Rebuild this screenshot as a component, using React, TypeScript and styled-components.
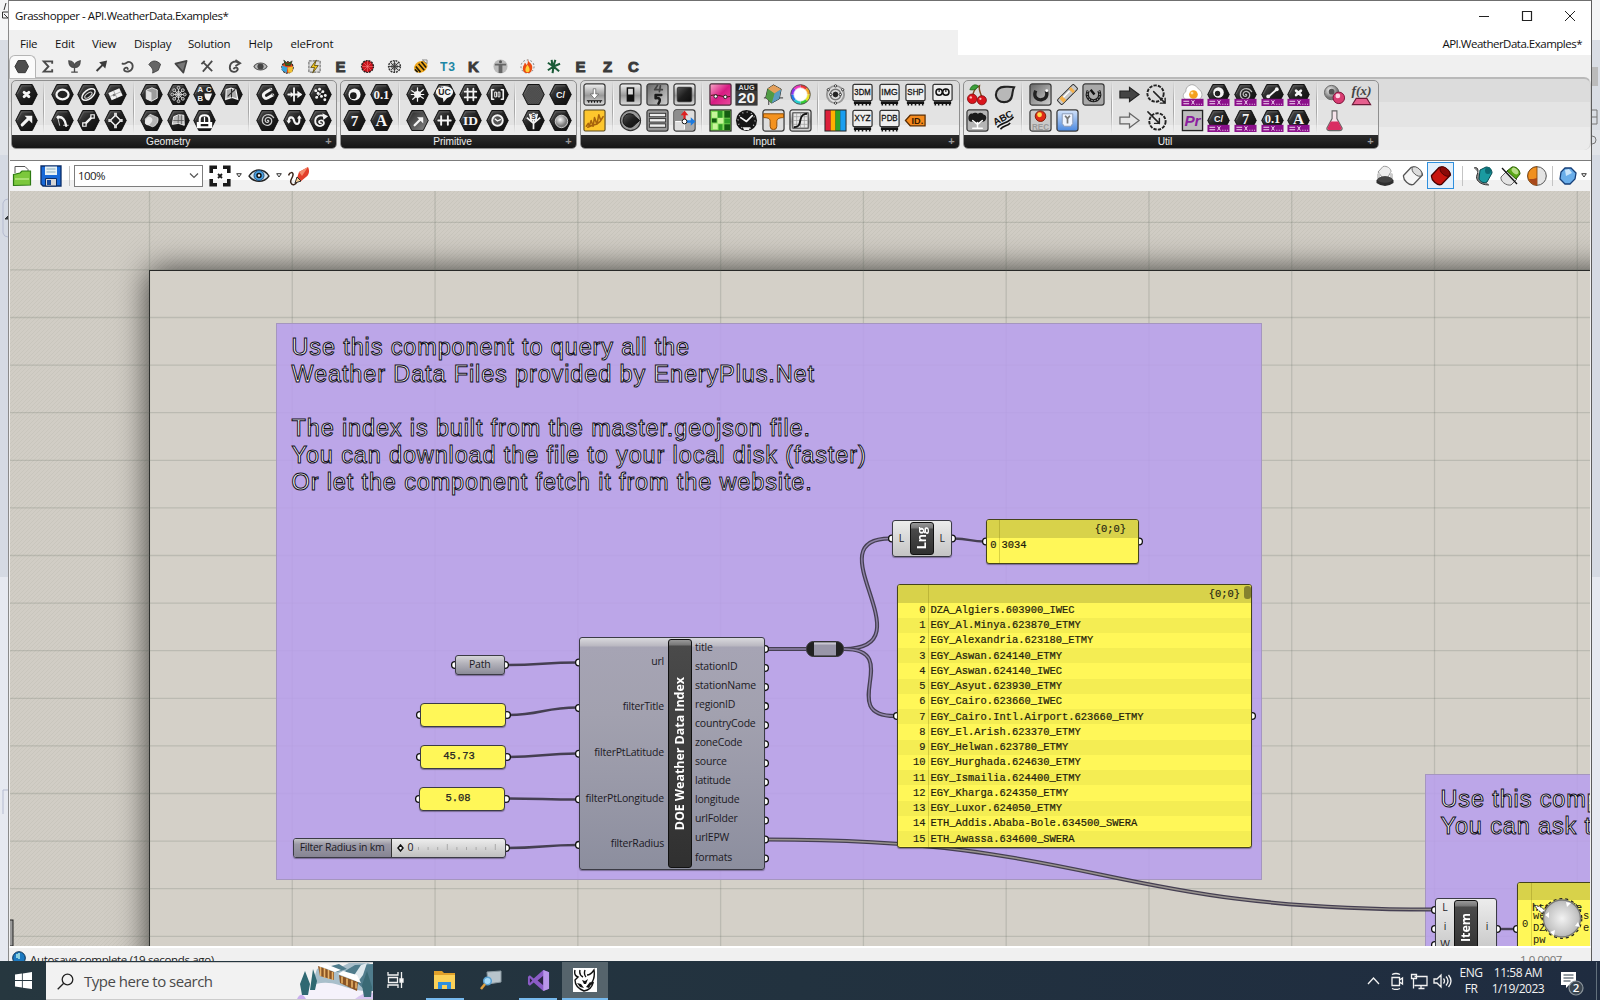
import React from "react";
import styled, { createGlobalStyle } from "styled-components";

const UI = '"Open Sans", "Noto Sans", sans-serif';
const MONO = '"Liberation Mono", monospace';

const Global = createGlobalStyle`
  html, body { margin: 0; padding: 0; height: 100%; overflow: hidden; }
  * { box-sizing: border-box; }
  body { font-family: ${UI}; }
  svg { display: block; }
`;

/* ---------- shell ---------- */
const Desktop = styled.div`
  width: 1600px; height: 1000px; overflow: hidden;
  display: grid; grid-template-rows: 961px 39px;
  background: #dcdfe4;
`;
const Stage = styled.div`display: grid; grid-template-columns: 8px 1584px 8px; overflow: hidden;`;
const Edge = styled.div`
  background: linear-gradient(#f4f5f6 0 40px, #d9dde4 40px 130px, #e0e3e8 130px 155px, #d5dae3 155px 60%, #e6e9f0 60%);
  overflow: hidden;
`;
const Window = styled.div`
  display: grid; grid-template-rows: 29px 25px 22px 83px 31px 755px 16px;
  background: #f0f0f0; border-top: 1px solid #6f6f6f;
  border-left: 1px solid #8a8a8a; border-right: 1px solid #5c5c5c; overflow: hidden;
`;
const TitleBar = styled.div`display: flex; align-items: center; background: #fff; padding: 0 0 0 6px; justify-content: space-between;`;
const TitleText = styled.span`font-size: 11.500px; letter-spacing: -0.460px; color: #111; white-space: nowrap;`;
const WinButtons = styled.div`display: flex; gap: 26px; padding-right: 13px;`;
const MenuBar = styled.div`
  display: flex; align-items: center; font-size: 11.500px; letter-spacing: -0.220px; color: #111;
  background: linear-gradient(90deg, #f0f0f0 0 949px, #fff 949px);
`;
const MenuItem = styled.span<{ $w: number }>`width: ${p => p.$w}px; white-space: nowrap; padding-top: 1px;`;
const MenuDoc = styled.span`margin-left: auto; padding-right: 9px; letter-spacing: -0.500px; padding-top: 1px;`;

/* ---------- tabs & ribbon ---------- */
const TabRow = styled.div`display: flex; height: 22px; background: #f0f0f0;`;
const Tab = styled.div<{ $on?: boolean }>`
  width: 26.640px; height: ${p => (p.$on ? 23 : 22)}px; display: flex; align-items: center; justify-content: center;
  position: relative; z-index: ${p => (p.$on ? 2 : 0)}; padding-right: 2px; flex: none;
  border: ${p => (p.$on ? "1px solid #b5b5b5" : "1px solid transparent")}; border-bottom: none;
  border-radius: 6px 6px 0 0; background: ${p => (p.$on ? "#fafafa" : "transparent")};
`;
const Ribbon = styled.div`height: 83px; padding-bottom: 10px;`;
const RibbonBody = styled.div`
  height: 73px; display: flex; gap: 3px; padding: 1px 0 0 2px;
  border-top: 2px solid #b9b9b9; border-right: 1px solid #cfcfcf; border-radius: 0 7px 7px 0;
  background: linear-gradient(#dcdcdc 0 23px, #e4e4e4 23px 48px, #ebebeb 48px);
`;
const RibbonPanel = styled.div<{ $w: number }>`
  width: ${p => p.$w}px; height: 69px; border: 1px solid #8f8f8f; border-radius: 5px; overflow: hidden;
  background: linear-gradient(#dcdcdc 0 19px, #e3e3e3 19px 44px, #ececec 44px);
  display: flex; flex-direction: column; justify-content: space-between;
`;
const IconArea = styled.div`display: flex; padding: 0 0 0 1px; height: 54px;`;
const IconGroup = styled.div`display: grid; grid-auto-flow: column; grid-template-rows: 26.600px 26.600px; grid-auto-columns: 26.660px; place-items: center;`;
const Divider = styled.div`
  width: 9.300px; height: 52px; display: flex; justify-content: center;
  &::before { content: ""; width: 2px; background: linear-gradient(90deg, #a8a8a8 50%, #fafafa 50%);
  mask-image: linear-gradient(transparent, #000 40%, #000 60%, transparent); }
`;
const PanelLabel = styled.div`
  height: 13px; display: grid; grid-template-columns: 3px 1fr 14px; align-items: center; text-align: center;
  background: linear-gradient(#2c2c2c, #151515); color: #eee;
  font: 10.200px/12px "Liberation Sans", sans-serif; letter-spacing: -.050px;
`;
const Plus = styled.span`color: #9a9a9a; font-weight: bold; font-size: 11px; line-height: 11px;`;

const ink = "#f4f4f4";
const L = (d: string, w = 1.6, c = ink, f = "none") => <path d={d} stroke={c} strokeWidth={w} fill={f} strokeLinecap="round" strokeLinejoin="round" />;
const T = (s: string, size = 12, c = ink, y = 16.4, fam = "Liberation Serif", x = 12) => (
  <text x={x} y={y} fontSize={size} fontFamily={`"${fam}"`} fontWeight="bold" textAnchor="middle" fill={c}>{s}</text>
);
const Hex = ({ fill = "url(#hexFill)" }: { fill?: string }) => (
  <>
    <polygon points="0.8,12 6,1.6 18,1.6 23.2,12 18,22.4 6,22.4" fill={fill} stroke="#0a0a0a" strokeWidth="1" strokeLinejoin="round" />
    <path d="M2.4 11.5 7 3h10" stroke="#666" strokeWidth=".8" fill="none" />
  </>
);
const Btn = ({ fill = "url(#btnFill)" }: { fill?: string }) => <rect x="1" y="1" width="22" height="22" rx="2.5" fill={fill} stroke="#3a3a3a" strokeWidth="1.3" />;
const Chip = ({ label }: { label: string }) => (
  <>
    <path d="M3 19h18v3H3z" fill="#111" />
    <path d="M4.5 21.500v2M8 21.500v2M12 21.500v2M16 21.500v2M19.500 21.500v2" stroke="#111" strokeWidth="1.600" />
    <rect x="2" y="1.500" width="20" height="17" rx="1.500" fill="#eee" stroke="#333" strokeWidth="1.300" />
    <text x="12" y="13" fontSize="9.500" fontFamily='"Liberation Sans"' textLength="17" lengthAdjust="spacingAndGlyphs" textAnchor="middle" fill="#111" stroke="#111" strokeWidth=".3">{label}</text>
  </>
);
const spiral = "M12 12c1-1 2 1 .6 1.800-2 1-4-1.500-2.600-3.600 2-2.700 6.500-1.200 6.400 2.600-.2 4-5.200 5.600-8 3-3.200-3-2-8.500 2.600-9.800 3-.7 6 .7 7.400 3";
const Strip = () => (
  <>
    <rect x=".5" y="16.500" width="23" height="7.500" fill="#8a0f8a" />
    <path d="M2.500 19h6M2.500 21.600h6M16 22.200h1M18.500 22.200h1M21 22.200h1" stroke="#f3d9f3" strokeWidth="1.200" />
    <path d="m11 18 3 4.500m0-4.500-3 4.500" stroke="#f3d9f3" strokeWidth="1" />
  </>
);
const Tag = ({ children }: { children: React.ReactNode }) => <><Hex />{children}<Strip /></>;

const icons: Record<string, React.ReactNode> = {
  point: <><Hex />{L("m9.500 9.800 5 4.400m0-4.400-5 4.400", 3)}</>,
  vector: <><Hex />{L("M7.500 16.500 14 10", 3.2)}<path d="M10 7h8v8z" fill={ink} /></>,
  circle: <><Hex /><ellipse cx="12" cy="12" rx="6.300" ry="5" fill="#222" stroke={ink} strokeWidth="2.300" /></>,
  arc: <><Hex />{L("M7 8.500c5-1 8 3 8.800 9", 2.4)}{L("m7 9 2 8m4 0h5", .8)}<circle cx="7.500" cy="8.500" r="1.600" fill={ink} /></>,
  curve: <><Hex /><g transform="rotate(-38 12 12)"><ellipse cx="12" cy="12" rx="8" ry="4.500" fill="none" stroke={ink} strokeWidth="1.500" /><ellipse cx="11.500" cy="12.500" rx="4.500" ry="2" fill="none" stroke="#ccc" strokeWidth="1.200" /></g></>,
  line: <><Hex />{L("m8 16 8-8", 2.4)}<path d="M6 14.500h3.500V18H6zM14.500 6H18v3.500h-3.500z" fill="#222" stroke={ink} strokeWidth="1.300" /></>,
  plane: <><Hex /><path d="m4.500 10.500 11.500-5 3.500 7.500-11.500 5z" fill="#f2f2f2" /><path d="m6.500 14 11.500-5M10 8.200l3.500 7.500" stroke="#888" strokeWidth=".7" /><path d="m9 12 2-1 1 2-2 1z" fill="#777" /></>,
  rect: <><Hex /><path d="m12 6.500 5.500 5.500-5.500 5.500L6.500 12z" fill="none" stroke={ink} strokeWidth="1.500" /><path d="M10.500 4h3v3.500h-3zM10.500 16.500h3V20h-3zM4.500 10.500H8v3H4.500zM16 10.500h3.500v3H16z" fill="#ddd" /></>,
  box: <><Hex /><path d="m6.500 7.500 6-2.500 5.500 2.200v8.600L12 19l-5.500-2.500z" fill="#9d9d9d" stroke={ink} strokeWidth=".9" /><path d="m6.500 7.500 5.500 2.300V19l-5.500-2.500z" fill="#e2e2e2" /></>,
  brep: <><Hex /><path d="m5.500 10.500 5-5 8 3.500c1.500 4-2 9-5.500 9.500l-7-3z" fill="#b5b5b5" stroke="#eee" strokeWidth=".8" /><ellipse cx="9" cy="12.500" rx="3.300" ry="4.500" fill="#e8e8e8" transform="rotate(35 9 12.500)" /></>,
  mesh: <><Hex /><circle cx="12" cy="12" r="3" fill="none" stroke={ink} strokeWidth="1" />{L("M12 5v14M5.500 12h13M7.500 7.500l9 9m0-9-9 9", .9, "#ddd")}{[[12, 5], [12, 19], [5.5, 12], [18.5, 12], [7.5, 7.5], [16.5, 7.5], [7.5, 16.5], [16.5, 16.5]].map(([x, y]) => <circle key={`${x}-${y}`} cx={x} cy={y} r="1.500" fill="#444" stroke="#ddd" strokeWidth=".9" />)}</>,
  grid: <><Hex /><path d="m6.500 7 5-1.500 5 1.500 2 10-6-2-6.500 2z" fill="#aaa" stroke={ink} strokeWidth="1.300" /><path d="m8 14 4-4 4-3.500M12 6v9" stroke="#2a2a2a" strokeWidth="1.100" fill="none" /></>,
  field: <><Hex />{T("A", 8, ink, 9, "Liberation Sans", 7.500)}{T("C", 8, ink, 9, "Liberation Sans", 16.500)}{T("B", 8, ink, 19, "Liberation Sans", 7.500)}<path d="M12 11h8l-3 7c-3 1-5-2-5-7z" fill={ink} /></>,
  loop: <><Hex /><path d="M7 20v-9q0-4.500 5-4.500t5 4.500v9M7 14.500h12v4.500H5v-4.500z" fill="none" stroke="#fff" strokeWidth="2.100" /><path d="M12 8v7" stroke="#fff" strokeWidth="1.300" /></>,
  surf: <><Hex /><path d="m7 8 5-2 5.500.5L18 17l-6-2-6.500 1z" fill="#bbb" stroke={ink} strokeWidth="1" /><path d="m12 6-.5 9M15 6.500 15 16M6.500 12h11" stroke="#555" strokeWidth=".8" /></>,
  magnet: <><Hex />{L("M15.500 6.500 9 10.500c-3 2.500 0 7 3.500 5l5-3", 3)}{L("m14.500 5.500 2 2.500m0 3 2 2.500", 1.200, "#777")}</>,
  spiral: <><Hex />{L(spiral, 1.3, "#ccc")}</>,
  mirror: <><Hex />{L("M11.500 5.500v13M5.500 12h13", 1.900)}<path d="m15 8 5 4-5 4zM8 9l3 3-3 3z" fill={ink} /></>,
  wave: <><Hex />{L("M6 12.500c0-5 4.500-5 5.500-.5s5.500 5 5.500 0V9", 2.200)}<path d="M3.500 12h5L6 15.500zM14.500 10h5L17 6.500z" fill={ink} /></>,
  cluster: <><Hex />{[[7, 8], [11, 6.500], [9.500, 11], [14.500, 9], [13, 14], [8, 15], [17, 13], [16.500, 17.500]].map(([x, y]) => <circle key={`${x}-${y}`} cx={x} cy={y} r="1.500" fill={ink} />)}{L("m7 8 7 6m0-5-6 6", .7)}</>,
  curl: <><Hex />{L("M16 7.500c-4-2-9-.5-9.500 4.500s4.500 7 7.500 5 1-6-2-5-1 3 .5 3", 1.900)}<path d="m14 4.500 6 3-5 4z" fill={ink} /></>,
  bool: <><Hex /><circle cx="12" cy="12" r="6.300" fill={ink} /><circle cx="10.800" cy="13.200" r="3.500" fill="#1b1b1b" /></>,
  num: <><Hex />{T("0.1", 13.500, ink, 16.600)}</>,
  seven: <><Hex />{T("7", 16, ink, 17.400)}</>,
  aText: <><Hex />{T("A", 17, ink, 17.600)}</>,
  spark: <><Hex />{L("M12 5v14M6 8l12 8m0-9L7 17M5.500 12h13", 1.300)}<circle cx="12" cy="12" r="3.600" fill={ink} /></>,
  uc: <><Hex /><ellipse cx="12" cy="9.500" rx="9" ry="6.500" fill={ink} /><path d="m10 14 1 6 5-6z" fill={ink} />{T("ÜC", 9, "#222", 12.500, "Liberation Sans")}</>,
  hash: <><Hex />{L("M9 6v12m6-12v12M6 9h12M6 15h12", 1.900)}</>,
  brackets: <><Hex />{L("M8 7H6v10h2m8-10h2v10h-2", 1.700)}{L("M9.500 9.500h1.500v5H9.500zM13 9.500h1.500v5H13z", 1)}</>,
  arrowHatch: <><Hex fill="url(#hexLight)" />{L("m9 17 6-6", 2.4)}<path d="M11.500 8.500h6.500v6.500z" fill={ink} /></>,
  domain: <><Hex />{L("M8.500 7.500v9m7-9v9M5.500 12h13", 2)}</>,
  idHex: <><Hex />{T("ID", 14, ink, 16.700)}</>,
  clockHex: <><Hex /><circle cx="12" cy="12" r="5.500" fill="#555" stroke={ink} strokeWidth="2" />{L("m9.500 10.500 2.500 2 3-1.500", 1.400)}</>,
  hexHatch: <Hex fill="url(#hatch)" />,
  cPath: <><Hex />{T("C/", 9.500, ink, 15.200, "Liberation Sans")}</>,
  treeHex: <><Hex /><path d="M12 21v-7M12 15 5 9m7 6 7-6m-9 4L8 5m6 8 2-8M12 14V4" stroke={ink} strokeWidth="1.800" /><circle cx="12" cy="8" r="3.500" fill={ink} />{T("S", 7, "#333", 10.500, "Liberation Sans")}</>,
  shader: <><Hex /><circle cx="13" cy="13" r="6.500" fill="url(#sphere)" stroke="#eee" strokeWidth=".8" /></>,
  download: <><Btn /><path d="M10.700 6h2.600v5.500h3L12 16.500l-4.300-5h3z" fill="#fff" stroke="#444" strokeWidth=".6" /><path d="M4 18.500h16M6 18v2.500m3-2.500v2.500m3-2.500v2.500m3-2.500v2.500m3-2.500v2.500" stroke="#111" strokeWidth="1.200" /></>,
  gene: <><rect x="1" y="1" width="22" height="22" rx="1.500" fill="#fdc62d" stroke="#5a4a20" strokeWidth="1.200" />{L("m3.500 18 2-3 1 3 2-6 2 6 1.500-9 2.500 7 2-10 2 6 2.500-4M5 19l5-2 4-1 4-3", 1.600, "#a8640c")}</>,
  toggle: <><Btn /><rect x="8" y="4.500" width="8" height="15" fill="#111" /><rect x="9.500" y="6" width="5" height="6" fill="#ddd" /></>,
  fortyFive: <><Btn fill="url(#btnDark)" />{L("M12 2.500 9 7h8m-2-4-1 6", 1.800, "#444")}{L("M16 12.500h-6v3.500c4-1 6 1 3 5.500", 2.600, "#1b1b1b")}</>,
  button: <><Btn /><rect x="4.500" y="4.500" width="15" height="15" rx="1.500" fill="url(#hexFill)" stroke="#333" /></>,
  knob: <><circle cx="12" cy="12" r="10.500" fill="#999" stroke="#333" strokeWidth="1.200" /><path d="M12 5a7 7 0 1 0 5 11l4.500-4L17 8a7 7 0 0 0-5-3z" fill="url(#hexFill)" stroke="#111" /></>,
  list: <><Btn fill="#999" />{[4.500, 10, 15.500].map(y => <rect key={y} x="3.500" y={y} width="17" height="3.600" fill="#ededed" stroke="#333" strokeWidth="1" />)}</>,
  axes: <><Btn fill="#ddd" /><path d="M1.500 1.500H11v11H1.500z" fill="#8d8d8d" /><path d="M12 13h10v9H12z" fill="#aaa" />{L("M12 3v18M3 13h18", 1, "#fff")}<path d="m12 1.500 4 5H8z" fill="#d22" /><path d="M12 6v6" stroke="#d22" strokeWidth="2.500" /><path d="m23.500 13-5 4.500v-9z" fill="#1d7be0" /><path d="M12 13h7" stroke="#1d7be0" strokeWidth="2.500" /><circle cx="12" cy="13" r="2.500" fill="#fff" stroke="#111" /></>,
  gradient: <><rect x="1" y="1" width="22" height="22" rx="1.500" fill="url(#pink)" stroke="#4a2a3a" strokeWidth="1.300" /><path d="M2 13c7-2 14 3 20 1" stroke="#511" fill="none" /><circle cx="7" cy="14" r="1.800" fill="#fff" stroke="#222" /><circle cx="17" cy="14.500" r="1.800" fill="#fff" stroke="#222" /></>,
  calendar: <><rect x=".5" y=".5" width="23" height="23" fill="#222" />{T("AUG", 7.500, "#ddd", 7, "Liberation Sans")}<rect x="1" y="8" width="22" height="15" fill="#3a3a3a" />{T("20", 16, "#f4f4f4", 21, "Liberation Sans")}</>,
  cubeColor: <><path d="M2 15.500h20M7 7v16" stroke="#555" strokeWidth="1.200" /><path d="m12 2 8 4.500-2 10L10 21l-6-6 2-9z" fill="#7d9d5b" stroke="#222" /><path d="m12 2 8 4.500-7 4.500-7-5z" fill="#e4a05c" /><path d="m13 11 7-4.500-2 10-8 4.500z" fill="#5a9bc0" /><path d="m6 6 7 5-3 10-6-6z" fill="#4f9b46" /></>,
  wheel: <g fill="none" strokeWidth="3.800">{["#e33", "#f0a020", "#e8e020", "#3c3", "#2cc", "#27e", "#83e", "#e3b"].map((c, i) => <path key={c} d="M12 3.500A8.500 8.500 0 0 1 18 6" stroke={c} transform={`rotate(${i * 45} 12 12)`} />)}<circle cx="12" cy="12" r="10.200" stroke="#555" strokeWidth="1" /><circle cx="12" cy="12" r="6.500" fill="#fff" stroke="#ffffff99" strokeWidth="2" /></g>,
  pixels: <><rect x="1" y="1" width="22" height="22" fill="#7ed957" stroke="#222" strokeWidth="1.200" /><path d="M3 3h6v6H3zM9 9h6v6H9zM4 15h5v6H4z" fill="#c8f59a" /><path d="M9 2h5v7H9zM16 10h6v5h-6zM10 16h4v6h-4z" fill="#2f9b26" /><path d="M16 2h6v7h-6zM3 10h5v4H3zM16 16h6v6h-6z" fill="#145c10" /></>,
  clock: <><circle cx="12" cy="12" r="11" fill="#151515" /><circle cx="12" cy="12" r="8.800" fill="none" stroke="#ccc" strokeWidth="1.400" strokeDasharray="1 3.600" />{L("m6 9 6 4 6-6", 1.800)}<path d="M8 19h8l-1.500 3h-5z" fill="#eee" /></>,
  drip: <><Btn fill="#ddd" /><path d="M1.500 5h21v4c-3 0-7 .5-7 4v5a3.500 3.500 0 0 1-7 0v-5c0-3-2-4-7-4z" fill="#f4921e" stroke="#8a4a05" /></>,
  graph: <><Btn /><rect x="4" y="4" width="16" height="16" fill="#e8e8e8" stroke="#333" /><path d="M8 4v16m4-16v16m4-16v16M4 8h16M4 12h16M4 16h16" stroke="#999" strokeWidth=".7" /><path d="M5 19c6 0 6-3 7-8s3-6 7-6" fill="none" stroke="#111" strokeWidth="2" /></>,
  ripple: <g fill="none" stroke="#777"><circle cx="12" cy="12" r="9" strokeWidth="2" stroke="#999" /><circle cx="12" cy="12" r="5.500" strokeWidth="1.500" /><circle cx="12" cy="12" r="2.500" fill="#222" stroke="#222" />{[[12, 3], [4.500, 7], [19.500, 7], [12, 21], [7, 12], [17, 12]].map(([x, y]) => <circle key={`${x}-${y}`} cx={x} cy={y} r="1.200" fill="#fff" stroke="#222" strokeWidth=".9" />)}</g>,
  rainbow: <><rect x=".5" y=".5" width="23" height="23" fill="#222" /><path d="M1.500 1.500H7v21H1.500z" fill="#dc1f3a" /><path d="M7 1.500h5v21H7z" fill="#ffb000" /><path d="M12 1.500h5v21h-5z" fill="#2fa32a" /><path d="M17 1.500h5.500v21H17z" fill="#1a9ef0" /></>,
  c3dm: <Chip label="3DM" />, cxyz: <Chip label="XYZ" />, cimg: <Chip label="IMG" />, cpdb: <Chip label="PDB" />, cshp: <Chip label="SHP" />,
  idTag: <><path d="m1.500 12 5-5.500H22v11H6.500z" fill="#f58a1c" stroke="#5b2c00" strokeWidth="1.300" />{T("ID.", 9.500, "#3a1a00", 15.500, "Liberation Sans", 14)}</>,
  cinf: <><Chip label="" /><circle cx="8.500" cy="9.500" r="3.300" fill="none" stroke="#111" strokeWidth="1.600" /><circle cx="15.500" cy="9.500" r="3.300" fill="none" stroke="#111" strokeWidth="1.600" /><path d="M8.500 9.500V6m7 3.500V6" stroke="#111" strokeWidth="1.200" /></>,
  cherry: <><path d="M7 15C7 9 10 5 14 3c-1 5 2 9 3 13" fill="none" stroke="#7a4a20" strokeWidth="1.500" /><path d="M13 3c-5-3-8 1-9 4 5 1 7-1 9-4z" fill="#3da03a" stroke="#1d5b1b" strokeWidth=".7" /><circle cx="6.500" cy="16.500" r="5" fill="#d9151d" stroke="#7a0508" strokeWidth=".8" /><circle cx="16.500" cy="18" r="4.800" fill="#d9151d" stroke="#7a0508" strokeWidth=".8" /><circle cx="5" cy="15" r="1.300" fill="#fbb" /><circle cx="15" cy="16.500" r="1.200" fill="#fbb" /></>,
  treeBtn: <><Btn fill="#b5b5b5" /><path d="M2.500 8c1-2 2-4 4-3 2-2 5-1 6 0 2-2 5-1 6 1 2 0 3 2 2.500 4s-2 4-4 3c-2 2-8 2-10 0-3 1-5-1-4.500-5z" fill="#1b1b1b" />{L("M12 20v-6m0 2-5-4m5 4 5-4M7 20h10", 1.500, "#fff")}</>,
  blob: <path d="M3 12.500C3 7 7 4 11.500 4c3 0 6-.5 10.500.5-1.500 2.500-1.500 5-2 8-.7 5-4 7.500-8.500 7.500S3 17 3 12.500z" fill="#b8b8b8" stroke="#222" strokeWidth="2.200" />,
  abc: <g transform="rotate(-28 12 12)">{T("ABC", 10, "#111", 12, "Liberation Sans")}<path d="M2 15c6-3 12 2 20-2M4 18c5-2 8 1 12-1" stroke="#111" strokeWidth="1.700" fill="none" /></g>,
  torusBtn: <><Btn fill="url(#btnDark)" /><path d="M7 8c-3 7 2 10 6 9.500s7-4 5-9.500" fill="none" stroke="#222" strokeWidth="3.500" /><circle cx="18.500" cy="8" r="1.500" fill="#fff" /></>,
  rec: <><Btn fill="#c9c9c9" /><circle cx="12" cy="7.500" r="5.500" fill="#e02a16" stroke="#7a1a05" /><circle cx="11" cy="6" r="2.500" fill="#ffd84a" />{T("REC", 8.500, "#999", 21.500, "Liberation Sans")}</>,
  marker: <g transform="rotate(45 12 12)"><rect x="8.500" y="0" width="7" height="24" rx="1.500" fill="#c9c9c9" stroke="#222" /><rect x="9" y="4" width="6" height="3" fill="#f4b04a" /><rect x="9" y="17" width="6" height="4" fill="#f4b04a" /><path d="M11 8v9" stroke="#fff" strokeWidth="1.500" /></g>,
  zip: <><Btn fill="url(#blueBtn)" /><path d="M6.500 5h11v10l-2 3h-7l-2-3z" fill="#eef4ff" stroke="#8a9ab5" /><path d="m9.500 7 2.500 3 2.500-3M12 10v5" stroke="#777" strokeWidth="1.800" fill="none" /></>,
  powerBtn: <><Btn fill="#a9a9a9" /><path d="M6.500 8c-3 6 1 10.500 5.500 10.500S20.500 14 17.500 8" fill="none" stroke="#1b1b1b" strokeWidth="3.200" /><path d="M6.500 8c-3 6 1 10.500 5.500 10.500S20.500 14 17.500 8" fill="none" stroke="#ddd" strokeWidth=".8" strokeDasharray="1.500 1.500" /><path d="m9 7 4 5" stroke="#111" strokeWidth="2.500" /></>,
  arrowDark: <path d="M2 8.500h10V4.500l10 7.500-10 7.500v-4H2z" fill="#444" stroke="#222" strokeWidth="1.200" />,
  arrowLight: <path d="M2 8.500h10V4.500l10 7.500-10 7.500v-4H2z" fill="#e6e6e6" stroke="#666" strokeWidth="1.300" />,
  compassOut: <><circle cx="11" cy="11" r="8.500" fill="none" stroke="#222" strokeWidth="2" strokeDasharray="3.500 1.200" />{L("m9 9 12 12m-5 0h5v-5", 1.500, "#222")}</>,
  compassIn: <><circle cx="13" cy="13" r="8.500" fill="none" stroke="#222" strokeWidth="2" strokeDasharray="3.500 1.200" />{L("m3 3 12 12m-5 0h5v-5", 1.500, "#222")}</>,
  egg: <><path d="M8 3c4-3 8 0 10 3 5 3 5 9 1 11H5c-4-2-3-6 0-8 0-3 1-5 3-6z" fill="#fff" stroke="#aaa" /><circle cx="13" cy="12" r="4.500" fill="#f5a01e" /><circle cx="11.500" cy="10.500" r="1.500" fill="#ffe0a0" /><Strip /></>,
  pr: <><rect x="1.500" y="1.500" width="21" height="21" fill="#bdbdbd" stroke="#222" strokeWidth="1.400" /><text x="12" y="17.500" fontSize="16" fontStyle="italic" fontWeight="bold" fontFamily='"Liberation Sans"' textAnchor="middle" fill="#8b1f9e">Pr</text></>,
  tBool: <Tag><circle cx="12" cy="10" r="5.500" fill={ink} /><circle cx="11" cy="11" r="2.800" fill="#222" /></Tag>,
  tPath: <Tag>{T("C/", 9.500, ink, 13.500, "Liberation Sans")}</Tag>,
  tSpiral: <Tag>{L(spiral, 1.300, "#bbb")}</Tag>,
  tSeven: <Tag>{T("7", 15, ink, 15.500)}</Tag>,
  tLine: <Tag>{L("m8 14 8-7", 2)}<circle cx="16.500" cy="6.500" r="2" fill={ink} /><circle cx="7.500" cy="14" r="2" fill={ink} /></Tag>,
  tNum: <Tag>{T("0.1", 13, ink, 14.500)}</Tag>,
  tPoint: <Tag>{L("m9.500 8 5 4.500m0-4.500-5 4.500", 2.800)}</Tag>,
  tA: <Tag>{T("A", 16, ink, 15.500)}</Tag>,
  spheres: <><circle cx="9" cy="10" r="7.500" fill="url(#sphere)" stroke="#666" /><circle cx="9" cy="9" r="3" fill="#555" /><circle cx="16.500" cy="15.500" r="6" fill="#d93c72" stroke="#7a1238" /><circle cx="15.500" cy="13.500" r="2.500" fill="#ffd5e5" /></>,
  flask: <><path d="M9.500 2h5v8l5.500 10c0 2-1 2.500-3 2.500H7c-2 0-3-.5-3-2.500l5.500-10z" fill="#f6e3ea" stroke="#666" strokeWidth="1.200" /><path d="m8 13-3.500 7c0 1 1 2 2.500 2h10c1.500 0 2.500-1 2.500-2L16 13z" fill="#d92d62" /></>,
  fx: <><text x="12" y="12" fontSize="14" fontStyle="italic" fontWeight="bold" fontFamily='"Liberation Serif"' textAnchor="middle" fill="#444">f(x)</text><path d="M6.500 16h11l4 6.500h-19z" fill="#e6608f" stroke="#6b1b38" strokeWidth="1.200" /></>,
};

const Icon = ({ name, size = 23 }: { name: string; size?: number }) => <svg width={size} height={size} viewBox="0 0 24 24">{icons[name]}</svg>;

const ribbonPanels: { label: string; width: number; groups: string[][] }[] = [
  { label: "Geometry", width: 325.5, groups: [["point", "vector"], ["circle", "arc", "curve", "line", "plane", "rect"], ["box", "brep", "mesh", "surf", "field", "loop", "grid", ""], ["magnet", "spiral", "mirror", "wave", "cluster", "curl"]] },
  { label: "Primitive", width: 237, groups: [["bool", "seven", "num", "aText"], ["spark", "arrowHatch", "uc", "domain", "hash", "idHex", "brackets", "clockHex"], ["hexHatch", "treeHex", "cPath", "shader"]] },
  { label: "Input", width: 380, groups: [["download", "gene"], ["toggle", "knob", "fortyFive", "list", "button", "axes"], ["gradient", "pixels", "calendar", "clock", "cubeColor", "drip", "wheel", "graph"], ["ripple", "rainbow", "c3dm", "cxyz", "cimg", "cpdb", "cshp", "idTag", "cinf", ""]] },
  { label: "Util", width: 416, groups: [["cherry", "treeBtn", "blob", "abc"], ["torusBtn", "rec", "marker", "zip", "powerBtn", ""], ["arrowDark", "arrowLight", "compassOut", "compassIn"], ["egg", "pr", "tBool", "tPath", "tSpiral", "tSeven", "tLine", "tNum", "tPoint", "tA"], ["spheres", "flask", "fx", ""]] },
];

const g = "#4a4a4a";
const tabLetter = (s: string) => <text x="8" y="13.800" fontSize="16" fontWeight="bold" fontFamily='"Liberation Sans"' textAnchor="middle" fill="#3a3a3a" stroke="#3a3a3a" strokeWidth="1">{s}</text>;
const tabIcons: React.ReactNode[] = [
  <polygon points="1,7 4.500,.5 12,.5 15.500,7 12,13.500 4.500,13.500" fill="#4d4d4d" stroke="#333" />,
  <path d="M13 5V2.500H4L9 8l-5 5.500h9V11" fill="none" stroke={g} strokeWidth="2" />,
  <path d="M8 14V9C4 9 2 6 2 2c4 0 6 3 6 6 0-3 2-5 6-6 0 4-2 7-6 7M4.500 14h7" fill="#555" stroke={g} strokeWidth="1.400" />,
  <path d="M2 12 8 6 5.500 3.500 14 1.500l-2 8.500-2.500-2.500-6 6z" fill="#3c3c3c" />,
  <path d="M2 4.500c4 3 5-3 9-1s3 8-1 9.500-7-1-5-3 4 0 3 1.500" fill="none" stroke="#4a4a4a" strokeWidth="1.900" />,
  <path d="M2 6C5 1 10 1 14.500 5.500L12 12l-6 3c1-4-1-6-4-9z" fill="#666" stroke="#444" />,
  <path d="m1.500 5 12-3-3.500 12.500z" fill="#777" stroke="#444" strokeWidth="1.800" strokeLinejoin="round" />,
  <path d="m3 3 10 10M13 2 3 13.500M1.500 5.500 5 2" stroke={g} strokeWidth="1.900" />,
  <path d="M12 4C8 1 3 4 3 9s6 6 8 3-3-4-4-1M9 1l5 3.500-5 3" fill="none" stroke={g} strokeWidth="2" />,
  <><path d="M1 8c3-5 11-5 14 0-3 5-11 5-14 0z" fill="#bbb" stroke="#555" strokeWidth="1.200" /><circle cx="8" cy="8" r="3.300" fill="#444" /></>,
  <><circle cx="8" cy="9" r="6" fill="#e44b1c" stroke="#222" strokeWidth="1.300" strokeDasharray="2 1" /><path d="M8 9 2 7v5l5 3z" fill="#36a3dc" /><path d="m8 9 6-1-1 6-4 1z" fill="#f0c030" /><path d="m4 1 4 4 5-3-2 5H6z" fill="#33691e" stroke="#222" strokeWidth=".6" /></>,
  <><rect x="2" y="2" width="12" height="12" fill="#ddd" stroke="#555" strokeDasharray="3 1" /><path d="M10 1 4 9h4l-2 6 6-8H8z" fill="#f6c81e" stroke="#4a3b00" strokeWidth=".8" /></>,
  tabLetter("E"),
  <><circle cx="8" cy="8" r="6.300" fill="#c9131c" stroke="#222" strokeDasharray="2 1" strokeWidth="1.500" /><path d="m4 4 8 8m0-8-8 8M8 2v12M2 8h12" stroke="#ff8d90" strokeWidth=".5" /></>,
  <><circle cx="8" cy="8" r="6.300" fill="#ddd" stroke="#333" strokeDasharray="2 1" strokeWidth="1.500" /><path d="m4 4 8 8m0-8-8 8M8 2v12M2 8h12" stroke="#333" strokeWidth=".9" /><circle cx="8" cy="8" r="3" fill="none" stroke="#333" /></>,
  <><ellipse cx="8" cy="8.500" rx="7.500" ry="6" fill="#f1a91e" transform="rotate(-30 8 8)" /><path d="m3 8 5 6M6 5l6 7m-3-9 5 6M2 11l3 3" stroke="#221a05" strokeWidth="1.700" /><path d="M10 1h5v4z" fill="#eee" stroke="#444" strokeWidth=".6" /></>,
  <text x="8" y="13" fontSize="13" fontWeight="bold" fontFamily='"Liberation Sans"' textAnchor="middle" fill="#1d87a5" textLength="16">T3</text>,
  tabLetter("K"),
  <><circle cx="8" cy="8" r="7.500" fill="#bbb" /><path d="M2 5h12v2h-4v8H6V7H2z" fill="#666" /><circle cx="8" cy="3" r="1.600" fill="#555" /></>,
  <><circle cx="8" cy="8" r="7" fill="#eee" stroke="#777" strokeDasharray="2 2" /><path d="M8 0c1 4 6 5 5 10-.5 4-3 5-5 5s-5-1-5-5c0-3 2-4 2-6 2 1 2 2 2 3 1-2 2-4 1-7z" fill="#ea4c12" /><path d="M8 6c3 4 3 8 0 8s-3-4 0-8z" fill="#ffd23a" /></>,
  <path d="M8 8 2 4m6 4-6 4m5-4L6 1m2 7 7-3m-7 3 6 5M8 8l-1 7M10 1 8 7" stroke="#1a5b38" strokeWidth="2.200" />,
  tabLetter("E"), tabLetter("Z"), tabLetter("C"),
];

const SharedDefs = () => (
  <svg width="0" height="0" style={{ position: "absolute" }}>
    <defs>
      <linearGradient id="hexFill" x1="0" y1="0" x2="1" y2="1"><stop offset="0" stopColor="#555" /><stop offset=".5" stopColor="#1f1f1f" /><stop offset="1" stopColor="#0d0d0d" /></linearGradient>
      <linearGradient id="hexLight" x1="0" y1="0" x2="1" y2="1"><stop offset="0" stopColor="#222" /><stop offset="1" stopColor="#8a8a8a" /></linearGradient>
      <linearGradient id="btnFill" x1="0" y1="0" x2="0" y2="1"><stop offset="0" stopColor="#f1f1f1" /><stop offset=".55" stopColor="#999" /><stop offset="1" stopColor="#ddd" /></linearGradient>
      <linearGradient id="btnDark" x1="0" y1="0" x2="1" y2="1"><stop offset="0" stopColor="#666" /><stop offset="1" stopColor="#d2d2d2" /></linearGradient>
      <linearGradient id="blueBtn" x1="0" y1="0" x2="0" y2="1"><stop offset="0" stopColor="#d4e4fb" /><stop offset="1" stopColor="#4a88e0" /></linearGradient>
      <linearGradient id="pink" x1="0" y1="0" x2="1" y2="1"><stop offset="0" stopColor="#f9a8c8" /><stop offset=".5" stopColor="#d81b83" /><stop offset="1" stopColor="#e84a9c" /></linearGradient>
      <radialGradient id="sphere" cx=".4" cy=".35"><stop offset="0" stopColor="#fafafa" /><stop offset="1" stopColor="#777" /></radialGradient>
      <radialGradient id="dial"><stop offset="0" stopColor="#f2f2f2" /><stop offset=".8" stopColor="#c6c6c6" /><stop offset="1" stopColor="#b5b5b5" /></radialGradient>
      <pattern id="hatch" width="2" height="2" patternUnits="userSpaceOnUse"><rect width="2" height="2" fill="#666" /><path d="m0 0 2 2" stroke="#2c2c2c" strokeWidth=".8" /></pattern>
    </defs>
  </svg>
);

/* ---------- canvas toolbar ---------- */
const ToolBar = styled.div`
  display: flex; align-items: center; border-top: 1px solid #7c7c7c; margin-left: 1px; padding: 0 1px 1px 1px;
  background: linear-gradient(#fff 0 19px, #f1f1f1 19px);
`;
const Slot = styled.div<{ $w: number; $on?: boolean }>`
  width: ${p => p.$w}px; height: 27px; display: flex; align-items: center; justify-content: center; flex: none;
  ${p => p.$on && "border: 1px solid #2f8fdd; background: #e3effa;"}
`;
const Sep = styled.div<{ $l: number; $r: number }>`width: 1px; height: 20px; background: #c4c4c4; margin: 0 ${p => p.$r}px 0 ${p => p.$l}px;`;
const Combo = styled.div`
  width: 129px; height: 22px; border: 1px solid #7d7d7d; background: #fff; display: flex; align-items: center; justify-content: space-between;
  font-size: 11.500px; letter-spacing: -.550px; padding: 0 3px; color: #222; line-height: 18px;
`;
const Push = styled.div`margin-left: auto;`;
const Caret = () => <svg width="6" height="5" viewBox="0 0 6 5"><path d="M.7.7h4.600L3 4z" fill="#fff" stroke="#222" strokeWidth=".9" /></svg>;
const Can = ({ fill, top, line = "#333" }: { fill: string; top: string; line?: string }) => (
  <svg width="22" height="22" viewBox="0 0 22 22"><path d="M1.500 10.500 9 2.500C13 0 20 6 20.500 10l-9 9.500C7 21 1 15 1.500 10.500z" fill={fill} stroke={line} strokeWidth="1.300" /><ellipse cx="15" cy="6.500" rx="3.400" ry="6" transform="rotate(-48 15 6.500)" fill={top} stroke={line} strokeWidth=".9" /></svg>
);

/* ---------- canvas ---------- */
const Canvas = styled.div`
  position: relative; overflow: hidden; margin: 0 1px 0 1px;
  background: linear-gradient(135deg, #c9c6bd 0 12.5%, #d1cdc5 12.5% 50%, #c9c6bd 50% 62.5%, #d1cdc5 62.5%) 0 0 / 4px 4px;
`;
const World = styled.div`position: absolute; left: -10px; top: -191px; width: 1600px; height: 1000px;`;
const Sheet = styled.div`
  position: absolute; left: 149px; top: 270px; width: 3000px; height: 3000px;
  background: #d4d0c8; border: 1px solid #222; box-shadow: 0 0 30px rgba(0, 0, 0, .72);
`;
const Layer = styled.svg`position: absolute; left: 0; top: 0;`;
const GroupBox = styled.div<{ $x: number; $y: number; $w: number; $h: number }>`
  position: absolute; left: ${p => p.$x}px; top: ${p => p.$y}px; width: ${p => p.$w}px; height: ${p => p.$h}px;
  background: rgba(184, 159, 236, .88); border: 1px solid #a596bf;
`;
const Scribble = styled.div<{ $top?: number }>`
  padding: ${p => p.$top ?? 9.5}px 0 0 14.500px; font: 23.500px/27px "Liberation Sans", sans-serif; letter-spacing: .860px; white-space: pre;
  color: #fff; -webkit-text-stroke: 1px #120f1c;
`;
const Node = styled.div<{ $x: number; $y: number; $w: number; $h: number }>`
  position: absolute; left: ${p => p.$x}px; top: ${p => p.$y}px; width: ${p => p.$w}px; height: ${p => p.$h}px;
  border: 1px solid #3b3b45; border-radius: 3px; overflow: hidden; box-shadow: 0 1px 1px rgba(0,0,0,.35);
`;
const label = `font-family: ${UI}; font-size: 10.500px; letter-spacing: -.200px; color: #1c1a24; white-space: nowrap;`;
const DoeNode = styled(Node)`
  display: grid; grid-template-columns: 84px 24px 1fr; column-gap: 3.500px;
  background: linear-gradient(#d9d9dd 0, #b9b7c0 8px, #a6a4b4 9px, #a2a1af 33%, #9a9aa9 60%, #8c8e9e);
`;
const Ins = styled.div`${label} display: grid; grid-template-rows: repeat(5, 45.600px); align-items: center; text-align: right; direction: rtl;`;
const Outs = styled.div`${label} display: grid; grid-template-rows: repeat(12, 19.050px); align-items: center; margin-top: -.500px;`;
const Core = styled.div<{ $size: number }>`
  display: flex; align-items: center; justify-content: center; margin: 1px 0; border: 1px solid #111; border-radius: 3px;
  background: linear-gradient(#999 0, #777 5px, #4a4a4a 6px, #303030);
  & > span { writing-mode: vertical-rl; transform: rotate(180deg); color: #fff; font: bold ${p => p.$size}px/14px ${UI}; white-space: nowrap; letter-spacing: -.050px; }
`;
const LightNode = styled(Node)`
  ${label} display: grid; grid-template-columns: 1fr 24px 1fr; text-align: center; align-items: stretch;
  background: linear-gradient(#ececec, #c4c4c4);
`;
const Pin = styled.div<{ $row?: boolean }>`display: flex; flex-direction: column; justify-content: ${p => (p.$row ? "flex-start" : "center")}; line-height: 18.500px; margin-top: -1px;`;
const Chiplet = styled(Node)`${label} display: flex; align-items: center; justify-content: center; padding-bottom: 2px; background: linear-gradient(#d5d5d8 0, #b4b3bb 40%, #8b8b98);`;
const YellowChip = styled(Node)`
  display: flex; align-items: center; justify-content: center; padding: 0 8px 1px 0;
  background: #fff758; font: 10.500px ${MONO}; color: #222; -webkit-text-stroke: .250px #222; border-radius: 4px;
`;
const Slider = styled(Node)`${label} display: grid; grid-template-columns: 98px 1fr; background: linear-gradient(#ededed, #bfbfbf);`;
const SliderName = styled.div`border-right: 1px solid #333; background: linear-gradient(#c4c4c8, #9b99a6 30%, #868492); text-align: center; line-height: 16px; letter-spacing: -.280px;`;
const SliderRail = styled.div`display: flex; align-items: center; gap: 4px; padding: 0 0 1px 5px; line-height: 15px;`;
const Panel = styled(Node)`background: #fff758; font: 10.450px/15.250px ${MONO}; color: #1f1d0c; border-color: #45431a;`;
const PanelHead = styled.div<{ $pad: number }>`height: 17.500px; background: #d8d24a; text-align: right; padding: 2px ${p => p.$pad}px 0 0; line-height: 15px; -webkit-text-stroke: .150px #222;`;
const PanelRow = styled.div<{ $idx: number; $alt?: boolean }>`
  display: grid; grid-template-columns: ${p => p.$idx}px 1fr; column-gap: 5px; height: 15.240px; white-space: pre;
  background: ${p => (p.$alt ? "#f4ed53" : "#fff758")}; align-items: center; padding-top: .500px;
  & > b { font-weight: normal; text-align: right; -webkit-text-stroke: .180px #222; }
  & > span { -webkit-text-stroke: .220px #1f1d0c; }
`;
const Rule = styled.div<{ $l: number }>`position: absolute; top: 0; bottom: 0; left: ${p => p.$l}px; width: 1px; background: rgba(120, 112, 10, .28);`;
const Thumb = styled.div`position: absolute; right: 0; top: 1px; width: 7px; height: 13px; border-radius: 3px; background: #85822f;`;

const stations = ["DZA_Algiers.603900_IWEC", "EGY_Al.Minya.623870_ETMY", "EGY_Alexandria.623180_ETMY", "EGY_Aswan.624140_ETMY", "EGY_Aswan.624140_IWEC", "EGY_Asyut.623930_ETMY", "EGY_Cairo.623660_IWEC", "EGY_Cairo.Intl.Airport.623660_ETMY", "EGY_El.Arish.623370_ETMY", "EGY_Helwan.623780_ETMY", "EGY_Hurghada.624630_ETMY", "EGY_Ismailia.624400_ETMY", "EGY_Kharga.624350_ETMY", "EGY_Luxor.624050_ETMY", "ETH_Addis.Ababa-Bole.634500_SWERA", "ETH_Awassa.634600_SWERA"];
const inputs = ["url", "filterTitle", "filterPtLatitude", "filterPtLongitude", "filterRadius"];
const outputs = ["title", "stationID", "stationName", "regionID", "countryCode", "zoneCode", "source", "latitude", "longitude", "urlFolder", "urlEPW", "formats"];

const Wire = ({ d, twin, pale = "#8f83a8" }: { d: string; twin?: boolean; pale?: string }) => (
  <g fill="none" strokeLinecap="butt">
    <path d={d} stroke="#453f52" strokeWidth={twin ? 4 : 2.400} />
    {twin && <path d={d} stroke={pale} strokeWidth="1.400" />}
  </g>
);
const ports: [number, number][] = [
  [455, 665], [505, 665], [420, 715], [507, 715], [420, 757], [507, 757], [419, 799], [506, 799], [506, 848],
  ...inputs.map((_, i) => [579, 662.500 + i * 45.600] as [number, number]),
  ...outputs.map((_, i) => [765, 649 + i * 19.050] as [number, number]),
  [892, 538.500], [952, 538.500], [986, 541.500], [1139, 541.500], [897, 716], [1252, 716], [1435, 910], [1435, 929], [1435, 945], [1497, 929], [1517, 929],
];
const verticals = Array.from({ length: 11 }, (_, i) => 149.500 + i * 142.780);
const horizontals = Array.from({ length: 16 }, (_, i) => 222.300 + i * 47.600);

/* ---------- status & task bar ---------- */
const Status = styled.div`
  border-top: 2px solid #fff; background: #f0f0f0; display: flex; justify-content: space-between; padding: 3px 29px 0 3px;
  height: 16px; overflow: hidden; font-size: 11.500px; letter-spacing: -.320px; color: #222; line-height: 17px;
`;
const StatusLeft = styled.div`display: flex; gap: 4px; white-space: nowrap;`;
const Version = styled.span`color: #777; letter-spacing: -.450px;`;
const TaskBar = styled.div`display: flex; background: linear-gradient(90deg, #26373f 0, #22323f 50%, #1f2c40); height: 39px; padding-top: 1px; color: #fff;`;
const TaskCell = styled.div<{ $w: number; $on?: boolean; $line?: string }>`
  width: ${p => p.$w}px; height: 38px; display: flex; align-items: center; justify-content: center;
  background: ${p => (p.$on ? "#56646c" : "transparent")};
  border-bottom: 2px solid ${p => p.$line ?? "transparent"};
`;
const Search = styled.div`
  width: 327px; height: 38px; background: #f2f2f2; display: flex; align-items: center; justify-content: space-between; padding-left: 11px;
  font-size: 15px; letter-spacing: -.500px; color: #4a4a4a; border: 1px solid #ccc; border-width: 1px 0;
  & > div { display: flex; gap: 10px; align-items: center; white-space: nowrap; }
`;
const Tray = styled.div`margin-left: auto; display: flex; align-items: center; padding-right: 3px;`;
const Stack = styled.div<{ $w: number }>`width: ${p => p.$w}px; text-align: center; font-size: 12px; line-height: 16.500px; letter-spacing: -.480px; white-space: nowrap; color: #f2f2f2; padding-bottom: 0;`;
const Peek = styled.div`width: 1px; height: 38px; background: #62707c;`;

const tw = { fill: "none", stroke: "#f2f2f2", strokeWidth: 1.3 };

export default function App() {
  return (
    <Desktop>
      <Global />
      <SharedDefs />
      <Stage>
        <Edge>
          <svg width="8" height="960" viewBox="0 0 8 960" fill="none" stroke="#333">
            <path d="m6 3-2 7M2.500 12h6v6h-6zM4 14l4 4" /><path d="M8 199q-4 0-5 4v30q1 4 5 4M8 790H3v24" stroke="#b5bbd0" /><path d="m8 216-3 3h3z" fill="#345" />
          </svg>
        </Edge>
        <Window>
          <TitleBar>
            <TitleText>Grasshopper - API.WeatherData.Examples*</TitleText>
            <WinButtons>
              <svg width="17" height="18" viewBox="0 0 17 18"><path d="M4 9.500h10" stroke="#222" /></svg>
              <svg width="17" height="18" viewBox="0 0 17 18"><path d="M4.500 4.500h9v9h-9z" stroke="#222" strokeWidth="1.200" fill="none" /></svg>
              <svg width="17" height="18" viewBox="0 0 17 18"><path d="m4 4 10 10M14 4 4 14" stroke="#222" /></svg>
            </WinButtons>
          </TitleBar>
          <MenuBar>
            <MenuItem $w={11} />
            <MenuItem $w={35}>File</MenuItem><MenuItem $w={37}>Edit</MenuItem><MenuItem $w={42}>View</MenuItem><MenuItem $w={54}>Display</MenuItem>
            <MenuItem $w={60.500}>Solution</MenuItem><MenuItem $w={42}>Help</MenuItem><MenuItem $w={60}>eleFront</MenuItem>
            <MenuDoc>API.WeatherData.Examples*</MenuDoc>
          </MenuBar>
          <TabRow>
            {tabIcons.map((t, i) => <Tab key={i} $on={i === 0}><svg width="15" height="15" viewBox="0 0 16 16">{t}</svg></Tab>)}
          </TabRow>
          <Ribbon>
            <RibbonBody>
              {ribbonPanels.map(p => (
                <RibbonPanel key={p.label} $w={p.width}>
                  <IconArea>
                    {p.groups.map((grp, i) => (
                      <React.Fragment key={i}>
                        {i > 0 && <Divider />}
                        <IconGroup>{grp.map((n, j) => <Icon key={j} name={n} />)}</IconGroup>
                      </React.Fragment>
                    ))}
                  </IconArea>
                  <PanelLabel><span /><span>{p.label}</span><Plus>+</Plus></PanelLabel>
                </RibbonPanel>
              ))}
            </RibbonBody>
          </Ribbon>
          <ToolBar>
            <Slot $w={22}>
              <svg width="20" height="22" viewBox="0 0 20 22"><path d="M3 8V1.500h10l3 3V9" fill="#fff" stroke="#555" /><path d="M1.500 9.500 8 8l2-2h8.500V20l-17 .5z" fill="#7cc83c" stroke="#2c7a12" strokeWidth="1.200" /><path d="M3 14h14" stroke="#a8e070" strokeWidth="2" /></svg>
            </Slot>
            <Slot $w={35}>
              <svg width="22" height="22" viewBox="0 0 22 22"><path d="M1 1h20v20H3l-2-2z" fill="#1769d8" stroke="#0b2d66" strokeWidth="1.300" /><path d="M5 1.500h12V10H5z" fill="#e6f1f4" /><path d="M6.500 4h9M6.500 7h9" stroke="#8ab" /><path d="M5.500 13.500h11V21h-11z" fill="#d5d5d5" stroke="#0b2d66" /><path d="M7 15h4v5H7z" fill="#164a9b" /></svg>
            </Slot>
            <Sep $l={1} $r={4} />
            <Combo>100%<svg width="10" height="7" viewBox="0 0 10 7"><path d="m1 1.500 4 4 4-4" fill="none" stroke="#555" strokeWidth="1.200" /></svg></Combo>
            <Slot $w={33}>
              <svg width="22" height="22" viewBox="0 0 22 22"><path d="M2.200 8V2.200H8M14 2.200h5.800V8m0 6v5.800H14m-6 0H2.200V14" fill="none" stroke="#1a1a1a" strokeWidth="3.600" /><path d="m9 9 4 4m0-4-4 4" stroke="#1a1a1a" strokeWidth="1.800" /></svg>
            </Slot>
            <Slot $w={6}><Caret /></Slot>
            <Slot $w={34}>
              <svg width="22" height="18" viewBox="0 0 22 18"><path d="M1 9C6 1 16 1 21 9 16 16 6 16 1 9z" fill="#d9e6ee" stroke="#222" strokeWidth="1.300" /><circle cx="11" cy="8.500" r="5" fill="#4aa0e0" stroke="#1b4f80" /><circle cx="11" cy="8.500" r="2" fill="#fff" stroke="#111" strokeWidth="1.500" /></svg>
            </Slot>
            <Slot $w={6}><Caret /></Slot>
            <Slot $w={33}>
              <svg width="22" height="22" viewBox="0 0 22 22"><path d="M.5 10.500c1-3.500 5-4 4.500-.5S1.500 15 3 18s5 2 6-2" fill="none" stroke="#3a2418" strokeWidth="1.500" /><path d="M9 13 11 7 20 2c2 4 1 8-2 10l-6 5z" fill="#e2402c" /><path d="m11 7 9-5-6 9z" fill="#f58a6c" /><path d="m7 18 2-6 4 4z" fill="#f0c890" stroke="#222" strokeWidth=".9" /></svg>
            </Slot>
            <Push />
            <Slot $w={27}>
              <svg width="22" height="22" viewBox="0 0 22 22"><path d="m4 7 5-5.500c4-1 8 2 8 5L14 12H8z" fill="#eee" stroke="#999" /><path d="M3 15V9l3-2v5zm16 0V9l-3-2v5z" fill="#ccc" /><path d="M2.500 15q8.500-7 17 0v3q-8.500 6-17 0z" fill="#2e2e2e" /><ellipse cx="11" cy="14.500" rx="7.500" ry="3.200" fill="#444" /></svg>
            </Slot>
            <Slot $w={29}><Can fill="#f6f6f6" top="#ddd" line="#555" /></Slot>
            <Slot $w={27} $on><Can fill="#c8150f" top="#8a0a08" line="#4a0200" /></Slot>
            <Sep $l={8} $r={7} />
            <Slot $w={26}><svg width="22" height="22" viewBox="0 0 22 22"><path d="M2 3c4-2 5 3 3 7s2 10 12 10" fill="#888" stroke="#333" /><path d="m8 5 6-3c4 0 6 3 6 6l-5 9c-4 2-7-1-8-3z" fill="#1a9aa0" stroke="#0a4a50" /><ellipse cx="16" cy="5.500" rx="3" ry="3.500" fill="#0d6a72" /></svg></Slot>
            <Slot $w={27}><svg width="22" height="22" viewBox="0 0 22 22"><path d="M2 12 9 5l9 9-6 6C7 21 1 16 2 12z" fill="#e4e4e4" stroke="#666" /><path d="m8 6 5-4c4-1 8 3 8 7l-4 5z" fill="#5aa818" stroke="#2a5a05" /><ellipse cx="16" cy="6" rx="2.500" ry="4" transform="rotate(-45 16 6)" fill="#b8dd88" /><path d="m3 3 15 16" stroke="#111" strokeWidth="1.300" /></svg></Slot>
            <Slot $w={27}><svg width="22" height="22" viewBox="0 0 22 22"><circle cx="11" cy="11" r="9.300" fill="#e4e4e4" stroke="#555" /><path d="M11 1.700a9.300 9.300 0 0 0 0 18.600z" fill="#f09020" stroke="#7a3a00" strokeWidth=".8" /><path d="M3 14c4 0 5 0 8-1v7C8 20 4 18 3 14z" fill="#a8481a" /></svg></Slot>
            <Sep $l={2} $r={5} />
            <Slot $w={20}><svg width="18" height="18" viewBox="0 0 18 18"><path d="M6 1h6l5 5-1 6-5 5H6l-5-5 1-7z" fill="#6aaeea" stroke="#163f78" strokeWidth="1.300" /><path d="m6 3 4-1 3 4-6 3z" fill="#c8e4fb" /></svg></Slot>
            <Slot $w={12}><Caret /></Slot>
          </ToolBar>

          <Canvas>
            <World>
              <Sheet />
              <Layer width="1600" height="1000" stroke="rgba(90,100,90,.2)" strokeWidth="1.300">
                {verticals.map(x => <path key={x} d={`M${x} 190V946`} />)}
                {horizontals.map(y => <path key={y} d={`M10 ${y}H1590`} />)}
              </Layer>
              <GroupBox $x={276} $y={323} $w={986} $h={556.500}>
                <Scribble>{"Use this component to query all the\nWeather Data Files provided by EneryPlus.Net\n\nThe index is built from the master.geojson file.\nYou can download the file to your local disk (faster)\nOr let the component fetch it from the website."}</Scribble>
              </GroupBox>
              <GroupBox $x={1425} $y={774} $w={300} $h={300}>
                <Scribble $top={10.5}>{"Use this component\nYou can ask the"}</Scribble>
              </GroupBox>
              <Layer width="1600" height="1000">
                <Wire d="M508 665C540 665 545 662.500 577 662.500" />
                <Wire d="M509 715C540 715 545 707.500 577 707.500" />
                <Wire d="M509 757C540 757 545 753.500 577 753.500" />
                <Wire d="M508 798.500C540 798.500 545 799.500 577 799.500" />
                <Wire d="M508 848C540 848 545 845 577 845" />
                <Wire twin d="M767 649H806" />
                <Wire twin d="M844 649C930 649 812 538.500 890 538.500" />
                <Wire twin d="M844 649C905 649 835 716 895 716" />
                <Wire d="M954 538.500C970 538.500 970 541.500 984 541.500" />
                <Wire twin pale="#99948f" d="M767 839.500C1100 839.500 1100 909.500 1433 909.500" />
                <Wire d="M1499 929H1516" />
                {ports.map(([x, y], i) => <circle key={i} cx={x} cy={y} r="3.400" fill="#fff" stroke="#111" strokeWidth="1.300" />)}
              </Layer>

              <Chiplet $x={455} $y={655} $w={49.500} $h={20}>Path</Chiplet>
              <YellowChip $x={420} $y={702.500} $w={86} $h={24} />
              <YellowChip $x={420} $y={744.500} $w={86} $h={24}>45.73</YellowChip>
              <YellowChip $x={419} $y={786.500} $w={86} $h={24}>5.08</YellowChip>
              <Slider $x={292.500} $y={838} $w={213} $h={20}>
                <SliderName>Filter Radius in km</SliderName>
                <SliderRail>
                  <svg width="7" height="8" viewBox="0 0 7 8"><path d="M3.500 1 6 4 3.500 7 1 4z" fill="#fff" stroke="#111" strokeWidth="1.500" /></svg>
                  0
                  <svg width="80" height="8" viewBox="0 0 80 8"><path d="M1.500 3v3m9.600-3v3m9.600-3v3M30.300 0v6m9.600-3v3m9.600-3v3m9.600-3v3m9.600-3v3m9.600-6v6" stroke="#aaa" fill="none" /></svg>
                </SliderRail>
              </Slider>

              <DoeNode $x={579} $y={637} $w={186} $h={233}>
                <Ins>{inputs.map(s => <span key={s}>{s}</span>)}</Ins>
                <Core $size={12.5}><span>DOE Weather Data Index</span></Core>
                <Outs>{outputs.map(s => <span key={s}>{s}</span>)}</Outs>
              </DoeNode>

              <Layer width="1600" height="1000">
                <rect x="806.500" y="641.500" width="37" height="15" rx="7" fill="#222" stroke="#333" />
                <rect x="814" y="642.500" width="22" height="13" fill="#9996a8" /><path d="M814 643.500h22" stroke="#c8c6d0" strokeWidth="2" />
              </Layer>

              <LightNode $x={892} $y={520} $w={59.500} $h={37}>
                <Pin>L</Pin><Core $size={12.5}><span>Lng</span></Core><Pin>L</Pin>
              </LightNode>
              <Panel $x={985.500} $y={519} $w={153.500} $h={44.500}>
                <PanelHead $pad={12}>{"{0;0}"}</PanelHead>
                <PanelRow $idx={10}><b>0</b><span>3034</span></PanelRow>
                <Rule $l={12} />
              </Panel>
              <Panel $x={896.500} $y={584} $w={355.500} $h={264}>
                <PanelHead $pad={11}>{"{0;0}"}</PanelHead>
                {stations.map((s, i) => <PanelRow key={s} $idx={28} $alt={i % 2 === 1}><b>{i}</b><span>{s}</span></PanelRow>)}
                <Rule $l={30} />
                <Thumb />
              </Panel>

              <LightNode $x={1435} $y={898} $w={62} $h={60}>
                <Pin $row><span>L</span><span>i</span><span>W</span></Pin>
                <Core $size={12.5}><span>Item</span></Core>
                <Pin $row><br /><span>i</span></Pin>
              </LightNode>
              <Panel $x={1517} $y={881.500} $w={120} $h={100}>
                <PanelHead $pad={0} />
                <PanelRow $idx={9}><b /><span>{"http://e"}</span></PanelRow>
                <Rule $l={13} />
              </Panel>
              <Layer width="1600" height="1000" fontFamily='"Liberation Mono"' fontSize="10.450" fill="#1f1d0c">
                <text x="1522" y="926.500">0</text>
                <text x="1533" y="919">we</text><text x="1583" y="919">s</text>
                <text x="1533" y="930.500">DZ</text><text x="1583" y="930.500">e</text>
                <text x="1533" y="942.500">pw</text>
                <path d="m1534 905 7 2 5 4-3 3-5-4z" fill="#fff" stroke="#222" strokeDasharray="2 1" />
                <circle cx="1562" cy="918.500" r="19.800" fill="none" stroke="#222" strokeDasharray="3 3" strokeWidth="1.200" />
                <circle cx="1562" cy="918.500" r="18.500" fill="url(#dial)" stroke="#777" strokeWidth="1.300" />
                <path d="m1566 902 5 1-4 4zm12 20 2 5-5-1zm-23 8-1 6-4-4zm-10-15 4-3v6z" fill="#fff" />
                <rect x="8" y="920" width="5" height="26" fill="#999" stroke="#222" />
              </Layer>
            </World>
          </Canvas>

          <Status>
            <StatusLeft>
              <svg width="14" height="14" viewBox="0 0 14 14"><circle cx="7" cy="7" r="6.300" fill="#1c79c0" stroke="#0b3050" /><path d="M7 2v6M5 3v4" stroke="#cfe" strokeWidth="1.300" /></svg>
              Autosave complete (19 seconds ago)
            </StatusLeft>
            <Version>1.0.0007</Version>
          </Status>
        </Window>
        <Edge>
          <svg width="8" height="200" viewBox="0 0 8 200" fill="none" stroke="#777"><path d="M0 67h6v19H0z" fill="#bbb" stroke="none" /><path d="M0 110h5v14H0m0-7h5M0 136a4 4 0 0 1 0 8" /></svg>
        </Edge>
      </Stage>

      <TaskBar>
        <TaskCell $w={46}><svg width="17" height="17" viewBox="0 0 16 16"><path d="m0 2.300 6.500-.9v6.200H0zm7.300-1L16 0v7.600H7.300zM0 8.400h6.500v6.200L0 13.700zm7.300 0H16V16l-8.700-1.200z" fill="#fff" /></svg></TaskCell>
        <Search>
          <div>
            <svg width="17" height="17" viewBox="0 0 17 17"><circle cx="10.500" cy="6.500" r="5.300" fill="none" stroke="#222" strokeWidth="1.300" /><path d="m6.700 10.300-6 6" stroke="#222" strokeWidth="1.300" /></svg>
            Type here to search
          </div>
          <svg width="76" height="36" viewBox="0 0 76 36">
            <path d="m20 6 10-4 12 3 10-5 12-3 12 5v34H10z" fill="#a9bfcb" /><path d="m30 4 12-3 8 5-10 3zM48 8l10-6 18-1v34z" fill="#4f7c8c" /><path d="m56 14 8-12 6-2-4 12-6 8z" fill="#dfe9ee" />
            <path d="M2 36c6-14 22-20 40-14s22 6 34 6v8z" fill="#f5f2fb" /><path d="M0 36c3-6 6-5 9 0z" fill="#c9b0ee" /><path d="M58 36c6-5 12-7 18-6v6z" fill="#d8c6f0" />
            <path d="m21 3 16 6v8l-14-4z" fill="#8a5424" /><path d="M23.500 4v9m4-8v10m4-8v9m4-7v8" stroke="#e8b36a" strokeWidth="1.600" /><path d="m20 2 18 7 6-2-15-6z" fill="#fff" />
            <path d="m42 12 19 7-1 9-17-8z" fill="#8a5424" /><path d="M45 13.500v7m5-5v7m5-5v7m4-5v6" stroke="#e8b36a" strokeWidth="1.600" /><path d="m41 11 5-3 14 4 4 8z" fill="#fff" />
            <path d="m8 8 5 13-2 11H5L3 21zM16 6l4 12-2 9h-5z" fill="#2f6872" /><path d="m70 8 5 16-1 10h-7l-2-12z" fill="#3a6a75" />
          </svg>
        </Search>
        <TaskCell $w={45}><svg width="17" height="18" viewBox="0 0 17 18"><g {...tw}><path d="M1 1v3h10V1M1 17v-3h10v3M1.500 6.500h9v5h-9zM14.500 1v16" /><path d="M13 8h3v3h-3z" fill="#fff" /></g></svg></TaskCell>
        <TaskCell $w={8} />
        <TaskCell $w={38} $line="#76b9ed"><svg width="22" height="20" viewBox="0 0 22 20"><path d="M0 1h8l2 2h11v16H0z" fill="#e0a02a" /><path d="M0 5h21v14H0z" fill="#fbd158" /><path d="M4 19v-7h13v7h-4v-4H8v4z" fill="#2f8fe0" /></svg></TaskCell>
        <TaskCell $w={6} />
        <TaskCell $w={42}><svg width="22" height="20" viewBox="0 0 22 20"><path d="m7 2 14-1v11l-13 2z" fill="#b8c4cc" stroke="#8c9aa2" /><circle cx="7.500" cy="11" r="3.800" fill="#a8dcfa" stroke="#5aa0d0" strokeWidth="1.500" /><path d="m5 14-4 5" stroke="#e0a040" strokeWidth="2.500" /></svg></TaskCell>
        <TaskCell $w={7} />
        <TaskCell $w={38} $line="#76b9ed"><svg width="23" height="23" viewBox="0 0 24 24"><path d="m17 1 6 2.500v17L17 23 7 14l-4 3.500L1 16V8l2-1.500L7 10z" fill="#8b5cc7" /><path d="M17 7v10l-6-5zM3 9.500v5L5.500 12z" fill="#2a2442" /><path d="m17 1 6 2.500v17L17 23z" fill="#b996ea" /></svg></TaskCell>
        <TaskCell $w={5} />
        <TaskCell $w={46} $on $line="#76b9ed"><svg width="24" height="24" viewBox="0 0 24 24"><path d="M0 0h24v24H0z" fill="#fff" /><path d="M2 2c-1 4 0 6 3 7l-3 3c0 5 4 9 9 11 5-1 8-4 9-8l-2 1c3-4 4-8 3-14-2 3-5 5-7 5M7 2c-1 4 1 6 3 7M12 2c-1 3-1 5 1 7" fill="none" stroke="#111" strokeWidth="1.400" /><path d="m4 15 4 1 3 4-4-1zM13 19l4-5 2 1-3 5zM9 12l3 1 3-2-2 5h-2z" fill="#111" /></svg></TaskCell>
        <Tray>
          <svg width="32" height="18" viewBox="0 0 32 18"><path d="m12 12 5.500-6 5.500 6" {...tw} /></svg>
          <svg width="16" height="18" viewBox="0 0 16 18"><path d="M4 5.500h7.500v8H4zM11.500 8l3-2v6l-3-2M4 2.500q4-2 8 0M4 16.500q4 2 8 0" {...tw} /></svg>
          <svg width="27" height="18" viewBox="0 0 27 18"><path d="M10.500 4.500H23v9H10.500M14.500 16.500h6M17 13.500v3M7.500 2.500h5v4h-5zM9.500 7v9.500" {...tw} /></svg>
          <svg width="22" height="18" viewBox="0 0 22 18"><path d="M3 7h3l4-4v12l-4-4H3zM12.500 6.500q2 2.500 0 5M15 4.500q4 4.500 0 9M17.500 3q5 6 0 12" {...tw} /></svg>
          <Stack $w={36}>ENG<br />FR</Stack>
          <Stack $w={58}>11:58 AM<br />1/19/2023</Stack>
          <svg width="49" height="38" viewBox="0 0 49 38"><path d="M14 10h15v13h-7l-3 3v-3h-5z" fill="#fff" /><path d="M16.500 13h10M16.500 16h10M16.500 19h7" stroke="#2a3a48" /><circle cx="29" cy="26" r="7" fill="#3b4650" stroke="#8c959c" strokeWidth="1.200" /><text x="29" y="30.200" fontSize="11.500" fill="#fff" textAnchor="middle" fontFamily='"Open Sans"' fontWeight="600">2</text></svg>
          <Peek />
        </Tray>
      </TaskBar>
    </Desktop>
  );
}
